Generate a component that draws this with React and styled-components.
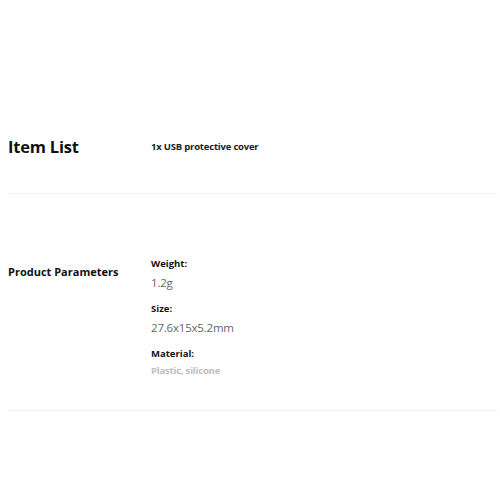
import React from "react";
import styled, { createGlobalStyle } from "styled-components";

const GlobalStyle = createGlobalStyle`
  html, body {
    margin: 0;
    padding: 0;
    background: #ffffff;
    font-family: "Open Sans", "Noto Sans", sans-serif;
  }
`;

const Page = styled.div`
  padding: 0 3px 0 8px;
`;

const Section = styled.div`
  display: grid;
  grid-template-columns: 143px 1fr;
  align-items: ${(p) => (p.$top ? "start" : "center")};
  padding: ${(p) => p.$pad};
  border-bottom: 1px solid #f0f0f0;
`;

const Title = styled.h2`
  margin: 0;
  font-size: 16.5px;
  font-weight: 700;
  color: #111;
  letter-spacing: -0.2px;
`;

const Label = styled.div`
  font-size: 11px;
  font-weight: 700;
  color: #111;
  padding-top: ${(p) => p.$offset || 0}px;
`;

const Items = styled.div`
  font-size: 9.5px;
  font-weight: 700;
  color: #222;
  letter-spacing: -0.2px;
`;

const Params = styled.div`
  display: flex;
  flex-direction: column;
`;

const ParamName = styled.div`
  font-size: 9.5px;
  font-weight: 700;
  color: #111;
  line-height: 14px;
`;

const ParamValue = styled.div`
  color: ${(p) => (p.$light ? "#bdbdbd" : "#666")};
  font-weight: ${(p) => (p.$light ? 700 : 400)};
  font-size: ${(p) => (p.$light ? "9.5px" : "11.5px")};
  line-height: ${(p) => (p.$light ? "20px" : "24px")};
  margin-bottom: 7px;
  letter-spacing: -0.2px;
`;

const params = [
  { name: "Weight:", value: "1.2g" },
  { name: "Size:", value: "27.6x15x5.2mm" },
  { name: "Material:", value: "Plastic, silicone", light: true },
];

export default function App() {
  return (
    <>
      <GlobalStyle />
      <Page>
        <Section $pad="135px 0 35px">
          <Title>Item List</Title>
          <Items>1x USB protective cover</Items>
        </Section>
        <Section $top $pad="63px 0 22px">
          <Label $offset={7}>Product Parameters</Label>
          <Params>
            {params.map((p) => (
              <div key={p.name}>
                <ParamName>{p.name}</ParamName>
                <ParamValue $light={p.light}>{p.value}</ParamValue>
              </div>
            ))}
          </Params>
        </Section>
      </Page>
    </>
  );
}
